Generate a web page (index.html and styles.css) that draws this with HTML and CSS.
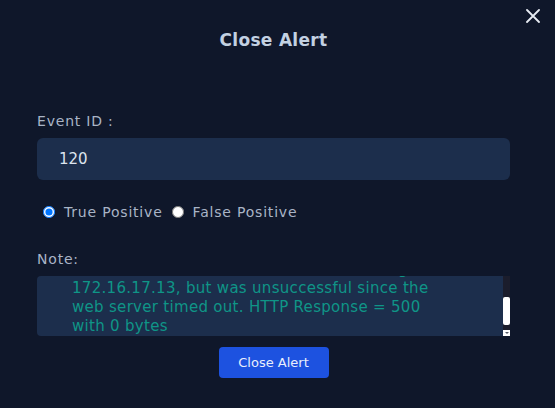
FILE: index.html
```html
<!DOCTYPE html>
<html lang="en">
<head>
    <meta charset="UTF-8">
    <meta name="viewport" content="width=device-width, initial-scale=1.0">
    <title>Close Alert</title>
    <link rel="stylesheet" href="styles.css">
</head>
<body>

    <div class="modal">
        <button class="close-x" aria-label="Close">
            <svg width="14" height="14" viewBox="0 0 14 14">
                <path d="M1 1 L13 13 M13 1 L1 13" stroke="#e6ebf2" stroke-width="1.8" stroke-linecap="round"/>
            </svg>
        </button>

        <h2 class="title">Close Alert</h2>

        <form class="close-form">
            <label class="field-label" for="event-id">Event ID :</label>
            <input type="text" id="event-id" class="text-input" value="120" readonly>

            <div class="radios">
                <label><input type="radio" name="verdict" checked> True Positive</label>
                <label><input type="radio" name="verdict"> False Positive</label>
            </div>

            <label class="field-label note-label" for="note">Note:</label>
            <div class="note-box">
                <textarea id="note" class="note">A GET request was sent to the web server at the
destination address of the attack, reaching
172.16.17.13, but was unsuccessful since the
web server timed out. HTTP Response = 500
with 0 bytes</textarea>
                <!-- свой скроллбар, нативный скрыт -->
                <div class="note-scroll">
                    <div class="note-thumb"></div>
                    <div class="note-arrow"></div>
                </div>
            </div>

            <div class="actions">
                <button type="button" class="btn-primary">Close Alert</button>
            </div>
        </form>
    </div>

    <script>
        // keep the note scrolled to its last line
        let note = document.getElementById('note');
        note.scrollTop = note.scrollHeight;
    </script>

</body>
</html>
```

FILE: styles.css
```css
body {
    margin: 0;
    background-color: #0f172a;
    font-family: "DejaVu Sans", sans-serif;
    color: #a9b4c6;
}
.modal {
    position: relative;
    padding: 30px 45px 30px 37px;
}
.close-x {
    position: absolute;
    top: 9px;
    right: 15px;
    background: none;
    border: none;
    padding: 0;
    cursor: pointer;
}
.title {
    margin: 0;
    text-align: center;
    font-size: 17px;
    font-weight: bold;
    letter-spacing: 0.3px;
    color: #c3d1e2;
}
.close-form {
    display: flex;
    flex-direction: column;
    margin-top: 62px;
}
.field-label {
    font-size: 14px;
    line-height: 18px;
    letter-spacing: 0.8px;
    color: #a9b4c6;
}
.text-input {
    margin-top: 8px;
    height: 42px;
    box-sizing: border-box;
    border: none;
    border-radius: 6px;
    background-color: #1c2e4c;
    color: #dde4ee;
    font-family: "DejaVu Sans", sans-serif;
    font-size: 15px;
    padding: 0 22px;
    outline: none;
}
.radios {
    display: flex;
    gap: 9px;
    margin-top: 24px;
    font-size: 14px;
    letter-spacing: 0.8px;
    color: #a9b4c6;
}
.radios label {
    display: flex;
    align-items: center;
    gap: 9px;
}
.radios input {
    margin: 0;
    width: 12px;
    height: 12px;
}
.radios label:first-child input {
    margin-left: 6px;
}
.note-label {
    margin-top: 30px;
}
.note-box {
    display: flex;
    margin-top: 8px;
    height: 60px;
    width: 473px;
}
.note {
    flex: 1;
    height: 60px;
    box-sizing: border-box;
    border: none;
    border-radius: 4px 0 0 4px;
    background-color: #1c2e4c;
    color: #0f9587;
    font-family: "DejaVu Sans", sans-serif;
    font-size: 15px;
    line-height: 19px;
    letter-spacing: 0.3px;
    padding: 4px 10px 0 35px;
    resize: none;
    outline: none;
    scrollbar-width: none;
}
.note-scroll {
    width: 7px;
    background-color: #1b1d2c;
    display: flex;
    flex-direction: column;
    justify-content: flex-end;
    gap: 5px;
}
.note-thumb {
    height: 28px;
    background-color: #ffffff;
    border-radius: 2px;
}
.note-arrow {
    height: 6px;
    background-color: #ffffff;
    display: flex;
    justify-content: center;
    align-items: center;
}
.note-arrow::after {
    content: "";
    border-left: 2px solid transparent;
    border-right: 2px solid transparent;
    border-top: 2px solid #555a66;
}
.actions {
    display: flex;
    justify-content: center;
    margin-top: 11px;
}
.btn-primary {
    background-color: #1d52e0;
    color: #e8eefc;
    border: none;
    border-radius: 4px;
    width: 110px;
    height: 31px;
    font-family: "DejaVu Sans", sans-serif;
    font-size: 13px;
    cursor: pointer;
}
```
